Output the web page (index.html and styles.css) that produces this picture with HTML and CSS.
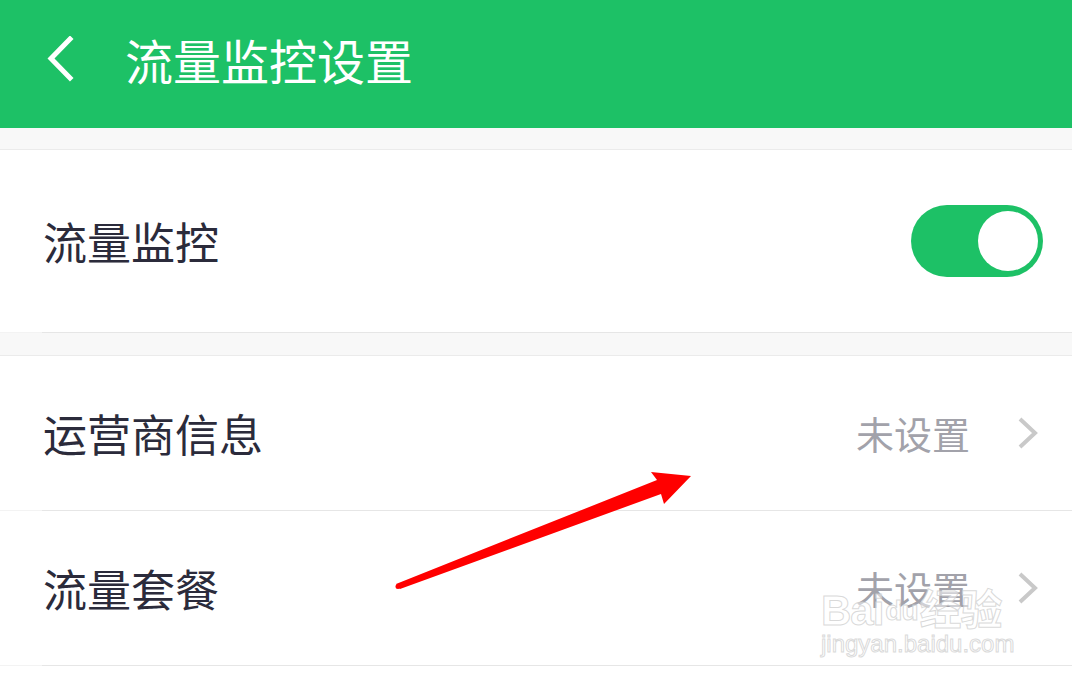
FILE: index.html
```html
<!DOCTYPE html>
<html lang="zh-CN">
<head>
<meta charset="utf-8">
<title>流量监控设置</title>
<link rel="stylesheet" href="styles.css">
</head>
<body>
<div class="page">
  <header class="topbar">
    <svg class="back" width="30" height="46" viewBox="0 0 30 46">
      <polyline points="24,3 5,22.5 24,42" fill="none" stroke="#ffffff" stroke-width="5" stroke-linecap="square"/>
    </svg>
    <h1 class="title">流量监控设置</h1>
  </header>

  <div class="gap gap-first"></div>

  <section class="group">
    <div class="row row-switch">
      <span class="label">流量监控</span>
      <div class="toggle"><div class="knob"></div></div>
    </div>
  </section>

  <div class="gap"></div>

  <section class="group">
    <div class="row row-link">
      <span class="label">运营商信息</span>
      <span class="value">未设置</span>
      <svg class="chev" width="21" height="34" viewBox="0 0 21 34">
        <polyline points="3,3 18,17 3,31" fill="none" stroke="#c9c9c9" stroke-width="4"/>
      </svg>
    </div>
    <div class="row row-link">
      <span class="label">流量套餐</span>
      <span class="value">未设置</span>
      <svg class="chev" width="21" height="34" viewBox="0 0 21 34">
        <polyline points="3,3 18,17 3,31" fill="none" stroke="#c9c9c9" stroke-width="4"/>
      </svg>
    </div>
  </section>

  <svg class="arrow" width="1072" height="678" viewBox="0 0 1072 678">
    <polygon points="396,584 657,480 651,472 691,476 664,504 661,494 400,589" fill="#ff0000"/>
    <circle cx="398" cy="586.5" r="2.5" fill="#ff0000"/>
  </svg>

  <div class="watermark">
    <div class="wm-top"><span>Bai</span><span class="paw">du</span><span>经验</span></div>
    <div class="wm-bottom">jingyan.baidu.com</div>
  </div>
</div>
</body>
</html>
```

FILE: styles.css
```css
html, body {
  margin: 0;
  padding: 0;
  background: #ffffff;
}

body {
  font-family: "Noto Sans CJK SC", "Noto Sans", sans-serif;
}

.page {
  position: relative;
  width: 1072px;
  height: 678px;
  overflow: hidden;
  background: #ffffff;
}

.topbar {
  height: 128px;
  background: #1dc166;
  display: flex;
  align-items: center;
  padding-left: 46px;
  padding-bottom: 10px;
  box-sizing: border-box;
}

.back {
  display: block;
  flex: none;
}

.title {
  margin: 0 0 0 49px;
  font-size: 48px;
  font-weight: 400;
  color: #ffffff;
  line-height: 1;
  letter-spacing: 0;
}

.gap {
  height: 22px;
  background: #f8f8f8;
  border-bottom: 1px solid #ebebeb;
}

.gap-first {
  height: 21px;
}

.group {
  background: #ffffff;
}

.row {
  display: flex;
  align-items: center;
  padding-left: 43px;
  box-sizing: border-box;
  border-bottom: 1px solid #f3f3f3;
  position: relative;
}

.row::after {
  content: "";
  position: absolute;
  left: 42px;
  right: 0;
  bottom: -1px;
  height: 1px;
  background: #e6e6e6;
}

.row-switch {
  height: 183px;
  padding-right: 29px;
}

.row-link {
  height: 155px;
  padding-right: 34px;
}

.label {
  flex: 1;
  font-size: 44px;
  color: #2b2b3b;
  line-height: 1;
}

.value {
  font-size: 38px;
  color: #a2a2aa;
  line-height: 1;
  margin-right: 47px;
}

.chev {
  display: block;
  flex: none;
}

.toggle {
  width: 132px;
  height: 72px;
  border-radius: 36px;
  background: #1dc166;
  display: flex;
  align-items: center;
  justify-content: flex-end;
  padding-right: 5px;
  box-sizing: border-box;
}

.knob {
  width: 60px;
  height: 60px;
  border-radius: 50%;
  background: #ffffff;
}

.arrow {
  position: absolute;
  left: 0;
  top: 0;
  pointer-events: none;
}

.watermark {
  position: absolute;
  left: 821px;
  top: 590px;
  width: 200px;
  pointer-events: none;
  color: rgba(255, 255, 255, 0.5);
  -webkit-text-stroke: 1px rgba(205, 205, 205, 0.75);
  font-family: "Liberation Sans", "Noto Sans CJK SC", sans-serif;
}

.wm-top {
  display: flex;
  align-items: center;
  font-size: 42px;
  line-height: 42px;
  font-weight: 700;
  letter-spacing: -1px;
}

.paw {
  font-size: 28px;
  margin: 0 2px;
}

.wm-bottom {
  font-size: 24px;
  line-height: 24px;
  letter-spacing: 0;
}
```
